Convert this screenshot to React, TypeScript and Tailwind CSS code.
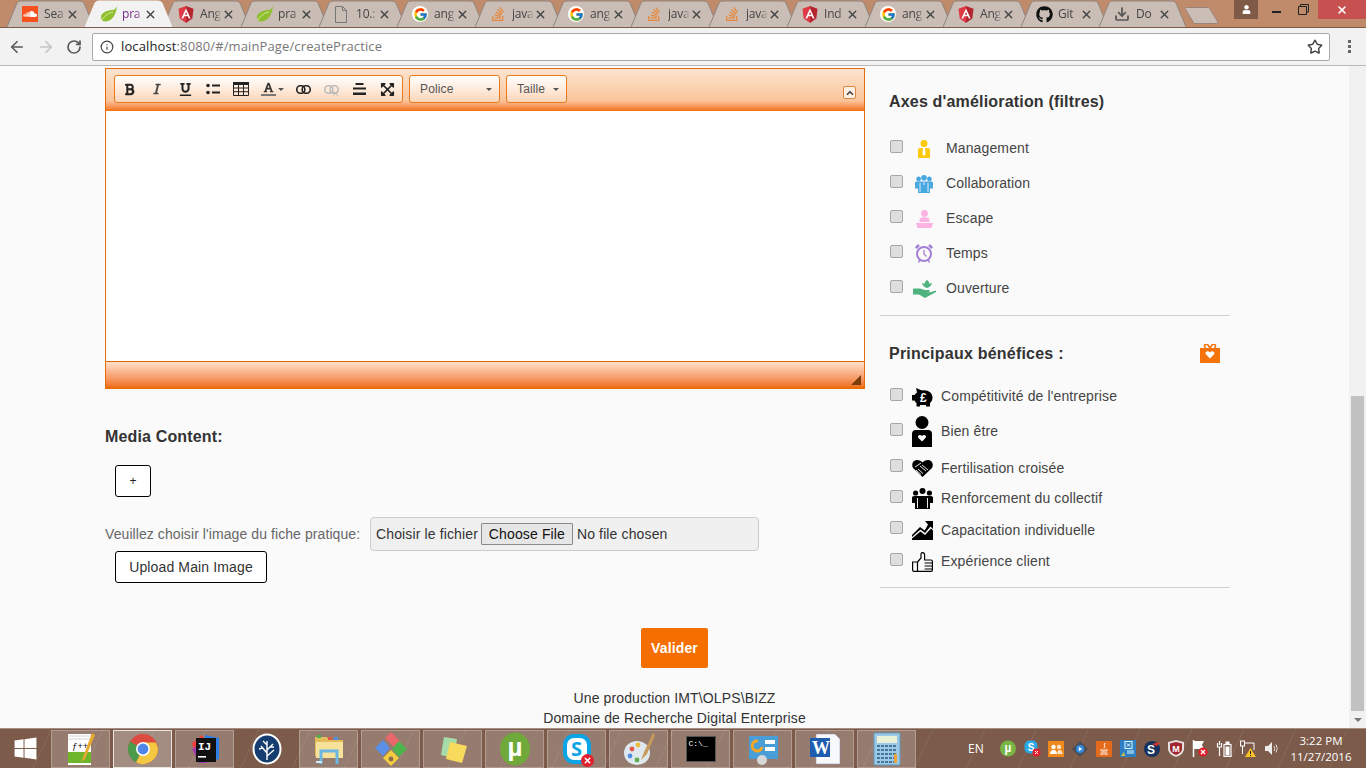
import { ArrowLeft, ArrowRight, RotateCw, Info, Star, X, Download, ChevronUp } from 'lucide-react';
import { FaGithub, FaStackOverflow, FaSoundcloud, FaBold, FaItalic, FaUnderline, FaFont, FaExpandArrowsAlt, FaWindows, FaUser } from 'react-icons/fa';
import { FcGoogle } from 'react-icons/fc';

function AngularIcon() {
  return (
    <svg width="16" height="17" viewBox="0 0 16 17">
      <path d="M8 0 L15.5 2.7 L14.3 12.6 L8 17 Z" fill="#b3262f" />
      <path d="M8 0 L.5 2.7 L1.7 12.6 L8 17 Z" fill="#dd3a45" />
      <path d="M8 2.5 L3.4 12.5 H5.2 L6.1 10.2 H9.9 L10.8 12.5 H12.6 Z M6.8 8.8 L8 5.9 L9.2 8.8 Z" fill="#fff" />
    </svg>
  );
}

function LeafIcon() {
  return (
    <svg width="18" height="18" viewBox="0 0 18 18">
      <path d="M17 1 C16 10 12 16 6 16.5 C3 16.8 1 15 1 12.5 C1 7 8 5 13 5 C15 4.5 16 3 17 1 Z" fill="#8fbf2f" />
      <path d="M2 15 C5 10 9 8 13 7" stroke="#d8ea9c" strokeWidth="1" fill="none" />
    </svg>
  );
}

function DocIcon() {
  return (
    <svg width="14" height="17" viewBox="0 0 14 17" fill="none" stroke="#777">
      <path d="M1.5 .5 H8.5 L12.5 4.5 V16.5 H1.5 Z M8.5 .5 V4.5 H12.5" />
    </svg>
  );
}

function Favicon({ kind }: { kind: string }) {
  if (kind === 'sc')
    return (
      <span className="flex h-[16px] w-[16px] items-center justify-center bg-[#f5501e] text-white">
        <FaSoundcloud size={14} />
      </span>
    );
  if (kind === 'leaf') return <LeafIcon />;
  if (kind === 'ng') return <AngularIcon />;
  if (kind === 'doc') return <DocIcon />;
  if (kind === 'g')
    return (
      <span className="flex h-[16px] w-[16px] items-center justify-center rounded-full bg-white">
        <FcGoogle size={15} />
      </span>
    );
  if (kind === 'so') return <FaStackOverflow size={16} className="text-[#e8883a]" />;
  if (kind === 'gh') return <FaGithub size={17} className="text-[#111]" />;
  return <Download size={16} strokeWidth={2.6} className="text-[#555]" />;
}

const tabs = [
  { kind: 'sc', title: 'Sea' },
  { kind: 'leaf', title: 'pra', active: true },
  { kind: 'ng', title: 'Ang' },
  { kind: 'leaf', title: 'pra' },
  { kind: 'doc', title: '10.:' },
  { kind: 'g', title: 'ang' },
  { kind: 'so', title: 'java' },
  { kind: 'g', title: 'ang' },
  { kind: 'so', title: 'java' },
  { kind: 'so', title: 'java' },
  { kind: 'ng', title: 'Ind' },
  { kind: 'g', title: 'ang' },
  { kind: 'ng', title: 'Ang' },
  { kind: 'gh', title: 'Git' },
  { kind: 'dl', title: 'Do' },
];

function Tab({ kind, title, active }: { kind: string; title: string; active?: boolean }) {
  return (
    <div className={`relative -mr-[9px] h-[27px] w-[87px] shrink-0 ${active ? 'z-10' : ''}`}>
      <svg className="absolute inset-0" width="87" height="27" viewBox="0 0 87 27">
        <path
          d="M0 27 L10 3 Q11 1 14 1 H73 Q76 1 77 3 L87 27"
          fill={active ? '#f2f2f2' : '#c9bdb6'}
          stroke={active ? '#f2f2f2' : '#8f8580'}
        />
      </svg>
      <div className="relative flex h-full items-center pl-[15px] pt-[1px]">
        <span className="flex w-[22px] shrink-0 items-center">
          <Favicon kind={kind} />
        </span>
        <span className={`w-[22px] overflow-hidden whitespace-nowrap text-[12px] tracking-[-0.2px] [mask-image:linear-gradient(to_right,black_65%,transparent)] ${active ? 'text-[#7a2a8a]' : 'text-[#444]'}`}>
          {title}
        </span>
        <X size={13} strokeWidth={2.6} className="text-[#444]" />
      </div>
    </div>
  );
}

function ChromeBar() {
  return (
    <div className="shrink-0 font-['Open_Sans',sans-serif]">
      <div className="relative flex h-[28px] items-end overflow-hidden border-b border-[#7d5a44] bg-[#bf8b6b] pl-[7px]">
        {tabs.map((t, i) => (
          <Tab key={i} kind={t.kind} title={t.title} active={t.active} />
        ))}
        {/* new tab button */}
        <svg className="ml-[7px] mr-auto mt-[7px] self-start" width="35" height="17" viewBox="0 0 35 17">
          <path d="M1 1.5 Q1 .5 3 .5 H25 L34 15 Q34 16.5 32 16.5 H10 Z" fill="#c9bdb6" stroke="#9a8478" />
        </svg>
        <div className="flex h-[19px] w-[24px] items-center justify-center self-start bg-[#7f5a46] text-white">
          <FaUser size={9} />
        </div>
        <div className="flex h-[19px] w-[60px] items-start self-start">
          <span className="ml-[14px] mt-[11px] h-[2px] w-[9px] bg-[#222]" />
          <svg className="ml-[17px] mt-[4px]" width="11" height="11" viewBox="0 0 11 11" fill="none" stroke="#222">
            <path d="M2.5 2 V.5 H10.5 V8 H8.5 M.5 2.5 H8.5 V10.5 H.5 Z" />
          </svg>
        </div>
        <div className="flex h-[19px] w-[48px] items-center justify-center self-start bg-[#c75050] text-white">
          <X size={12} strokeWidth={3.2} />
        </div>
      </div>
      <div className="flex h-[38px] items-center border-b border-[#b9b9b9] bg-[#f2f2f2]">
        <ArrowLeft size={18} strokeWidth={2.2} className="ml-[8px] text-[#5a5a5a]" />
        <ArrowRight size={18} strokeWidth={2.2} className="ml-[11px] text-[#c4c4c4]" />
        <RotateCw size={16} strokeWidth={2.6} className="ml-[11px] text-[#5a5a5a]" />
        <div className="ml-[10px] flex h-[28px] w-[1238px] items-center rounded-[2px] border border-[#a9a9a9] bg-white pl-[7px] pr-[6px]">
          <Info size={14} className="text-[#444]" />
          <span className="ml-[7px] text-[13px] tracking-[0.12px] text-[#777]">
            <span className="text-[#222]">localhost</span>:8080/#/mainPage/createPractice
          </span>
          <Star size={16} strokeWidth={2.2} className="ml-auto text-[#444]" />
        </div>
        <div className="ml-[18px] flex flex-col gap-[2px]">
          <span className="h-[3px] w-[3px] bg-[#666]" />
          <span className="h-[3px] w-[3px] bg-[#666]" />
          <span className="h-[3px] w-[3px] bg-[#666]" />
        </div>
      </div>
    </div>
  );
}

function Caret() {
  return <span className="h-0 w-0 border-x-[3px] border-t-[3px] border-x-transparent border-t-[#555]" />;
}

function ChainIcon({ color }: { color: string }) {
  return (
    <svg width="15" height="9" viewBox="0 0 15 9" fill="none" stroke={color} strokeWidth="1.6">
      <rect x=".8" y=".8" width="8" height="7.4" rx="3.5" />
      <rect x="6.2" y=".8" width="8" height="7.4" rx="3.5" />
    </svg>
  );
}

function EditorToolbar() {
  const btn = 'flex h-full w-[28px] items-center justify-center text-[#222]';
  return (
    <div className="flex h-[42px] items-start bg-gradient-to-b from-[#fde4d0] via-[#fac59b] via-75% to-[#f37000] pl-[8px] pt-[6px]">
      <div className="flex h-[28px] w-[289px] rounded-[3px] border border-[#ea7a1c] bg-gradient-to-b from-white to-[#fbd6b9]">
        <div className={btn}><FaBold size={13} /></div>
        <div className={btn}><FaItalic size={12} className="text-[#444]" /></div>
        <div className={btn}><FaUnderline size={13} /></div>
        <div className={btn}>
          <svg width="14" height="12" viewBox="0 0 14 12" fill="#222">
            <circle cx="2" cy="2.5" r="1.8" />
            <circle cx="2" cy="9.5" r="1.8" />
            <rect x="6" y="1.5" width="8" height="2" />
            <rect x="6" y="8.5" width="8" height="2" />
          </svg>
        </div>
        <div className={btn}>
          <svg width="16" height="14" viewBox="0 0 16 14" fill="none" stroke="#222">
            <path d="M.5 2 H15.5 V13.5 H.5 Z M.5 6 H15.5 M.5 9.7 H15.5 M5.5 2 V13.5 M10.5 2 V13.5" />
            <rect x=".5" y=".5" width="15" height="2" fill="#222" />
          </svg>
        </div>
        <div className="flex h-full w-[34px] items-center justify-center gap-[2px]">
          <span className="flex flex-col items-center">
            <FaFont size={11} className="text-[#333]" />
            <span className="mt-[1px] h-[2px] w-[15px] bg-[#777]" />
          </span>
          <Caret />
        </div>
        <div className={btn}><ChainIcon color="#222" /></div>
        <div className={btn}>
          <span className="relative flex">
            <ChainIcon color="#bbb" />
            <X size={7} strokeWidth={3} className="absolute -bottom-[3px] right-0 text-[#aaa]" />
          </span>
        </div>
        <div className={btn}>
          <svg width="13" height="12" viewBox="0 0 13 12" fill="#222">
            <rect x="2.5" y="0" width="8" height="2" />
            <rect x="0" y="4.5" width="13" height="2" />
            <rect x="0" y="9.5" width="13" height="2.5" />
          </svg>
        </div>
        <div className={btn}><FaExpandArrowsAlt size={15} /></div>
      </div>
      <div className="ml-[6px] flex h-[28px] w-[91px] items-center justify-between rounded-[3px] border border-[#ea7a1c] bg-gradient-to-b from-white to-[#fbd6b9] pl-[10px] pr-[7px] text-[12px] text-[#555]">
        Police <Caret />
      </div>
      <div className="ml-[6px] flex h-[28px] w-[61px] items-center justify-between rounded-[3px] border border-[#ea7a1c] bg-gradient-to-b from-white to-[#fbd6b9] pl-[10px] pr-[7px] text-[12px] text-[#555]">
        Taille <Caret />
      </div>
      <div className="ml-[276px] mt-[11px] flex h-[13px] w-[13px] items-center justify-center rounded-[2px] border border-[#d9893f] bg-[#fdeee2]">
        <ChevronUp size={10} strokeWidth={4} className="text-[#444]" />
      </div>
    </div>
  );
}

function Editor() {
  return (
    <div className="mt-[2px] flex h-[321px] flex-col border border-[#e56c0a]">
      <EditorToolbar />
      <div className="h-[250px] bg-white" />
      <div className="flex flex-1 items-end justify-end border-t border-[#d9660a] bg-gradient-to-b from-[#fde0ca] to-[#ee6c00] pb-[3px] pr-[3px]">
        <span className="h-0 w-0 border-b-[10px] border-l-[10px] border-b-[#7a3d0c] border-l-transparent" />
      </div>
    </div>
  );
}

function LeftColumn() {
  return (
    <div className="w-[760px] shrink-0">
      <Editor />
      <h3 className="mt-[36px] h-[24px] text-[16px] font-bold leading-[24px] tracking-[0.15px] text-[#333]">Media Content:</h3>
      <button className="ml-[10px] mt-[16px] block h-[32px] w-[36px] rounded-[3px] border border-black bg-white text-[12px] text-[#222]">+</button>
      <div className="mt-[20px] flex items-center">
        <span className="w-[255px] shrink-0 whitespace-nowrap text-[14px] tracking-[0.08px] text-[#666]">Veuillez choisir l'image du fiche pratique:</span>
        <div className="ml-[10px] flex h-[34px] w-[389px] items-center rounded-[4px] border border-[#ccc] bg-[#f0f0f0] pl-[5px] text-[14px] text-[#333]">
          Choisir le fichier
          <span className="ml-[3px] flex h-[22px] w-[92px] items-center justify-center rounded-[1px] border border-[#8a8a8a] bg-[#e6e6e6] text-[#111]">Choose File</span>
          <span className="ml-[4px]">No file chosen</span>
        </div>
      </div>
      <button className="ml-[10px] block h-[32px] w-[152px] rounded-[3px] border border-black bg-white text-[14px] text-[#333]">Upload Main Image</button>
    </div>
  );
}

function PersonTie() {
  return (
    <svg width="14" height="18" viewBox="0 0 14 18" fill="#fdc90a">
      <circle cx="7" cy="3.6" r="3.5" />
      <path d="M1 18 V10 Q1 8 3 8 H11 Q13 8 13 10 V18 Z" />
      <path d="M6 8 H8 L8.6 14 L7 16 L5.4 14 Z" fill="#fff" />
    </svg>
  );
}

function BlueGroup() {
  return (
    <svg width="18" height="18" viewBox="0 0 18 18" fill="#4aa8e0">
      <circle cx="3.6" cy="4" r="2.4" />
      <circle cx="14.4" cy="4" r="2.4" />
      <circle cx="9" cy="2.8" r="2.8" />
      <path d="M0 7.5 Q0 6.5 2 6.5 H16 Q18 6.5 18 7.5 V13.5 H15 V18 H3 V13.5 H0 Z" />
      <path d="M5 8 V17 M13 8 V17 M9 7 V10" stroke="#fff" strokeWidth=".8" />
    </svg>
  );
}

function PinkDesk() {
  return (
    <svg width="17" height="18" viewBox="0 0 17 18" fill="#fcb3e3">
      <circle cx="8.5" cy="3.5" r="3.4" />
      <path d="M3.5 12 V10 Q3.5 7.5 6 7.5 H11 Q13.5 7.5 13.5 10 V12 Z" />
      <path d="M0 13 H17 L15.5 18 H1.5 Z" />
    </svg>
  );
}

function PurpleClock() {
  return (
    <svg width="18" height="19" viewBox="0 0 18 19" fill="none" stroke="#a47fd8" strokeWidth="2">
      <circle cx="9" cy="10" r="7" />
      <path d="M9 6 V10 L11.5 12.5" strokeWidth="1.3" />
      <path d="M3.5 18.5 L5 15.5 M14.5 18.5 L13 15.5" strokeWidth="1.5" />
      <path d="M.8 4 L4 1 M17.2 4 L14 1" strokeWidth="2.4" />
    </svg>
  );
}

function GreenHand() {
  return (
    <svg width="23" height="18" viewBox="0 0 23 18" fill="#4fb37f">
      <path d="M14 8 C11 7.5 9.5 5 9 3 C10 3 10.8 3.3 11.5 4 C11.6 2.5 12.5 1 14 0 C15.5 1 16.4 2.5 16.5 4 C17.2 3.3 18 3 19 3 C18.5 5 17 7.5 14 8 Z" />
      <path d="M0 8.5 H7 L12 10 H16 Q17 10.5 16.5 12 H12 L17 12.3 L23 10.5 V12 L12 18 L6 14.5 H0 Z" />
    </svg>
  );
}

function GiftIcon() {
  return (
    <svg width="20" height="19" viewBox="0 0 20 19" fill="#f4730a">
      <path d="M0 4 H20 V19 H0 Z" />
      <path d="M5.5 4 C3 1 6 -1 8 1 L10 4 L12 1 C14 -1 17 1 14.5 4" fill="none" stroke="#f4730a" strokeWidth="1.6" />
      <path d="M10 14.5 L5.8 10.3 C4.5 8 7.8 6 10 8.5 C12.2 6 15.5 8 14.2 10.3 Z" fill="#fff" />
    </svg>
  );
}

function PiggyPound() {
  return (
    <svg width="21" height="20" viewBox="0 0 21 20" fill="#000">
      <path d="M4 1 L10 3.5 C16 2.5 20.5 6 20.5 10.5 C20.5 13 19.5 15 18 16 V19.5 H14 V18 H8 V19.5 H4.5 V16 C3.5 15.2 3 14.5 2.5 13.5 H0 V8 H2.5 C3 7 3.8 6.2 5 5.5 Z" />
      <text x="11.5" y="14.5" fontSize="12" fontWeight="700" textAnchor="middle" fill="#fff" fontFamily="Liberation Sans">£</text>
    </svg>
  );
}

function PersonHeart() {
  return (
    <svg width="20" height="31" viewBox="0 0 20 31">
      <circle cx="10" cy="6.5" r="6.5" fill="#000" />
      <path d="M0 31 V18 Q0 14 4 14 H16 Q20 14 20 18 V31 Z" fill="#000" />
      <path d="M10 25.5 L6.3 21.8 C5 19.7 8 18 10 20 C12 18 15 19.7 13.7 21.8 Z" fill="#fff" />
    </svg>
  );
}

function HandshakeHeart() {
  return (
    <svg width="21" height="18" viewBox="0 0 21 18">
      <path d="M10.5 18 L1 9 C-1 5.5 1 1 5 1 C7.5 1 9.3 2 10.5 3.5 C11.7 2 13.5 1 16 1 C20 1 22 5.5 20 9 Z" fill="#000" />
      <path d="M3 8 L9 4 M8 7 L14 12 M10 6 L16 11 M6 10 L11 14.5 M4 11 L9 15.5" stroke="#fff" strokeWidth=".9" fill="none" />
    </svg>
  );
}

function BlackGroup() {
  return (
    <svg width="21" height="21" viewBox="0 0 21 21" fill="#000">
      <circle cx="10.5" cy="3" r="3" />
      <circle cx="3.6" cy="5" r="2.6" />
      <circle cx="17.4" cy="5" r="2.6" />
      <path d="M0 9.5 Q0 8 2 8 H19 Q21 8 21 9.5 V15 H18 V21 H3 V15 H0 Z" />
      <path d="M5.5 10 V20 M15.5 10 V20" stroke="#fff" strokeWidth=".9" />
    </svg>
  );
}

function ChartUp() {
  return (
    <svg width="21" height="19" viewBox="0 0 21 19" fill="#000">
      <path d="M13 0 H21 V8 L18.5 5.5 L13 12 L8.5 8.5 L0 16 V14 L8 6 L12.7 9.5 L16 3.5 Z" />
      <path d="M0 19 V17.5 L8.5 10.5 L13 14 L19 7.5 L21 9.5 V19 Z" />
    </svg>
  );
}

function ThumbUp() {
  return (
    <svg width="21" height="20" viewBox="0 0 21 20" fill="none" stroke="#000" strokeWidth="1.2">
      <path d="M.6 10 H5.5 V19.4 H2 Q.6 19.4 .6 18 Z" />
      <path d="M5.5 10 L9 6 V2 Q9 .6 10.5 .6 Q12.6 .6 12.6 3 V8 H19 Q20.4 8 20.4 9.5 V18 Q20.4 19.4 19 19.4 H5.5" />
      <path d="M12.6 11 H20.4 M12.6 14 H20.4 M12.6 17 H20.4" />
    </svg>
  );
}

const filters = [
  { label: 'Management', icon: <PersonTie /> },
  { label: 'Collaboration', icon: <BlueGroup /> },
  { label: 'Escape', icon: <PinkDesk /> },
  { label: 'Temps', icon: <PurpleClock /> },
  { label: 'Ouverture', icon: <GreenHand /> },
];

const benefits = [
  { label: "Compétitivité de l'entreprise", h: 'h-[33px]', icon: <PiggyPound /> },
  { label: 'Bien être', h: 'h-[37px]', icon: <PersonHeart /> },
  { label: 'Fertilisation croisée', h: 'h-[36px]', icon: <HandshakeHeart /> },
  { label: 'Renforcement du collectif', h: 'h-[25px]', icon: <BlackGroup /> },
  { label: 'Capacitation individuelle', h: 'h-[38px]', icon: <ChartUp /> },
  { label: 'Expérience client', h: 'h-[25px]', icon: <ThumbUp /> },
];

function Check() {
  return (
    <input
      type="checkbox"
      readOnly
      className="mb-[5px] h-[13px] w-[13px] shrink-0 appearance-none rounded-[2px] border border-[#a6a6a6] bg-[#dedede]"
    />
  );
}

function RightColumn() {
  return (
    <div className="ml-[15px] w-[350px] shrink-0">
      <div className="border-b border-[#cfcfcf] pb-[9px] pl-[9px] pt-[24px]">
        <h3 className="h-[24px] text-[16px] font-bold leading-[24px] tracking-[0.18px] text-[#333]">Axes d'amélioration (filtres)</h3>
        <ul className="mt-[17px]">
          {filters.map((f) => (
            <li key={f.label} className="flex h-[35px] items-center pl-px text-[14px] text-[#444]">
              <Check />
              <span className="ml-[9px] flex w-[24px] justify-center">{f.icon}</span>
              <span className="ml-[10px]">{f.label}</span>
            </li>
          ))}
        </ul>
      </div>
      <div className="border-b border-[#cfcfcf] pb-[13px] pl-[9px] pt-[26px]">
        <h3 className="flex h-[24px] justify-between pr-[10px] text-[16px] font-bold leading-[24px] tracking-[0.22px] text-[#333]">
          Principaux bénéfices :
          <span className="mt-[2px] flex h-[19px]"><GiftIcon /></span>
        </h3>
        <ul className="mt-[14px]">
          {benefits.map((b) => (
            <li key={b.label} className={`flex items-center pl-px text-[14px] text-[#444] ${b.h}`}>
              <Check />
              <span className="ml-[7px] flex w-[24px] justify-center">{b.icon}</span>
              <span className="ml-[7px]">{b.label}</span>
            </li>
          ))}
        </ul>
      </div>
    </div>
  );
}

function Scrollbar() {
  return (
    <div className="flex w-[17px] shrink-0 flex-col bg-[#f1f1f1]">
      <div className="mx-[2px] mt-auto h-[315px] bg-[#c1c1c1]" />
      <div className="flex h-[17px] items-center justify-center">
        <span className="h-0 w-0 border-x-[4px] border-t-[4px] border-x-transparent border-t-[#777]" />
      </div>
    </div>
  );
}

function ChromeLogo() {
  return (
    <svg width="32" height="32" viewBox="0 0 32 32">
      <circle cx="16" cy="16" r="15" fill="#dd4b3e" />
      <path d="M16 16 L3 8.5 A15 15 0 0 0 9 29.3 Z" fill="#4a9b4a" />
      <path d="M16 16 L9 29.3 A15 15 0 0 0 30.9 15 L29 9.5 H16 Z" fill="#f5c842" />
      <circle cx="16" cy="16" r="7" fill="#fff" />
      <circle cx="16" cy="16" r="5.4" fill="#4f86e8" />
    </svg>
  );
}

const taskApps: React.ReactNode[] = [
  <svg width="28" height="34" viewBox="0 0 28 34" key="npp">
    <rect x="1" y="2" width="23" height="31" fill="#fff" />
    <rect x="1" y="20" width="23" height="11" fill="#6fb52c" />
    <path d="M1 4 H24 M1 7 H24" stroke="#bbb" strokeWidth=".6" />
    <text x="5" y="17" fontSize="9" fill="#111" fontFamily="Liberation Mono">ƒ++</text>
    <path d="M25 1 L16 25 L14.5 30 L18 27 L28 3 Z" fill="#e8a92e" />
  </svg>,
  <ChromeLogo key="chrome" />,
  <svg width="32" height="32" viewBox="0 0 32 32" key="ij">
    <path d="M3 10 L13 2 L20 16 L6 22 Z" fill="#f0403f" />
    <path d="M16 2 L30 5 L30 26 L14 30 Z" fill="#2e7fe8" />
    <path d="M3 16 L10 30 L18 30 L10 12 Z" fill="#a23bb0" />
    <rect x="7" y="5" width="20" height="24" fill="#111" />
    <text x="9" y="17" fontSize="11" fontWeight="700" fill="#fff" fontFamily="Liberation Mono">IJ</text>
    <rect x="9" y="23" width="8" height="1.6" fill="#fff" />
  </svg>,
  <svg width="30" height="32" viewBox="0 0 30 32" key="tree">
    <ellipse cx="15" cy="16" rx="14.5" ry="15.5" fill="#fff" />
    <ellipse cx="15" cy="16" rx="12.5" ry="13.5" fill="#153d70" />
    <path d="M15 27 V8 M15 20 L9 13 M15 17 L21 11 M15 23 L22 17 M11 15 L7 16 M15 12 L11 8 M18 14 L22 14" stroke="#fff" strokeWidth="1.4" fill="none" />
  </svg>,
  <svg width="32" height="34" viewBox="0 0 32 34" key="folder">
    <path d="M2 5 H14 L16 8 H30 V24 H2 Z" fill="#e3bd5c" />
    <rect x="4" y="3" width="4" height="3" fill="#4cb050" />
    <rect x="15" y="5" width="4" height="3" fill="#e0564a" />
    <rect x="21" y="5" width="4" height="3" fill="#4e8ee0" />
    <rect x="3" y="10" width="27" height="16" fill="#f6e29a" />
    <path d="M8 32 V19 H24 V32" fill="none" stroke="#6cb6e2" strokeWidth="3" />
    <path d="M3 30 H9" stroke="#cfeafa" strokeWidth="2" />
  </svg>,
  <svg width="32" height="34" viewBox="0 0 32 34" key="git">
    <path d="M16 0 L25 9 L19 15 L10 6 Z" fill="#e8676b" />
    <path d="M8 8 L15 16 L8 24 L0 16 Z" fill="#5b8fe8" />
    <path d="M24 9 L32 17 L24 25 L17 17 Z" fill="#4eb54e" />
    <path d="M8 26 L16 18 L24 26 L16 34 Z" fill="#f3cc3f" />
    <circle cx="16" cy="27" r="2.4" fill="#8a6d52" />
  </svg>,
  <svg width="32" height="30" viewBox="0 0 32 30" key="sticky">
    <path d="M7 3 L20 5 L17 24 L4 21 Z" fill="#a6dca8" />
    <path d="M13 8 L30 12 L25 29 L9 25 Z" fill="#f8da5c" />
  </svg>,
  <svg width="32" height="34" viewBox="0 0 32 34" key="ut">
    <ellipse cx="16" cy="17" rx="15" ry="16.5" fill="#6fa93a" />
    <text x="16" y="24" fontSize="26" fontWeight="700" textAnchor="middle" fill="#fff" fontFamily="Liberation Sans">µ</text>
  </svg>,
  <span className="relative flex" key="skype">
    <span className="flex h-[30px] w-[28px] items-center justify-center rounded-[11px] border-[4px] border-[#0ba5e6] bg-white text-[20px] font-bold leading-none text-[#0ba5e6]">S</span>
    <span className="absolute -bottom-[3px] -right-[3px] flex h-[13px] w-[13px] items-center justify-center rounded-full bg-[#e0202c] text-white">
      <X size={9} strokeWidth={4} />
    </span>
  </span>,
  <svg width="32" height="34" viewBox="0 0 32 34" key="paint">
    <ellipse cx="14" cy="21" rx="13" ry="12" fill="#dfe8ec" />
    <circle cx="9" cy="17" r="2.4" fill="#e0564a" />
    <circle cx="15" cy="13" r="2.4" fill="#e8bd3e" />
    <circle cx="7" cy="24" r="2.4" fill="#4e8ee0" />
    <circle cx="14" cy="28" r="2.4" fill="#5dab52" />
    <path d="M30 1 L21 20 L18 28 L24 22 L32 3 Z" fill="#c79a5d" />
  </svg>,
  <span className="flex h-[26px] w-[30px] items-start border border-[#555] bg-black p-[2px] font-['Liberation_Mono',monospace] text-[8px] leading-[10px] text-white" key="cmd">
    C:\_
  </span>,
  <svg width="32" height="32" viewBox="0 0 32 32" key="ctrl">
    <rect x="2" y="3" width="29" height="23" fill="#4a9ed8" />
    <path d="M11 8 A5 5 0 1 0 15 14" fill="none" stroke="#f5a623" strokeWidth="3" />
    <rect x="18" y="7" width="10" height="4" fill="#fff" />
    <rect x="18" y="14" width="10" height="4" fill="#fff" />
    <circle cx="15" cy="27" r="5" fill="#d8d8d8" />
  </svg>,
  <svg width="32" height="32" viewBox="0 0 32 32" key="word">
    <path d="M7 1 H26 L31 6 V31 H7 Z" fill="#f6f8fb" stroke="#88a" strokeWidth=".5" />
    <path d="M1 5 H21 V24 H1 Z" fill="#1e5cb0" />
    <text x="3" y="21" fontSize="18" fontWeight="700" fill="#fff" fontFamily="Liberation Serif">W</text>
  </svg>,
  <svg width="28" height="34" viewBox="0 0 28 34" key="calc">
    <rect x="1" y="1" width="26" height="32" rx="1" fill="#9cc9e6" stroke="#5f9ac2" />
    <rect x="4" y="4" width="20" height="7" fill="#e9f1d8" />
    <path d="M4 14 H24 M4 18 H24 M4 22 H24 M4 26 H24 M4 30 H24" stroke="#46769c" strokeWidth="2" strokeDasharray="3 1" />
    <rect x="21" y="22" width="3" height="9" fill="#eea43b" />
  </svg>,
];

const trayIcons: React.ReactNode[] = [
  <svg width="16" height="17" viewBox="0 0 16 17" key="ut">
    <circle cx="8" cy="8.5" r="8" fill="#79b544" />
    <text x="8" y="12" fontSize="12" fontWeight="700" textAnchor="middle" fill="#fff" fontFamily="Liberation Sans">µ</text>
  </svg>,
  <svg width="17" height="17" viewBox="0 0 17 17" key="skype">
    <rect x=".5" y=".5" width="13" height="13" rx="5" fill="#2aa9e6" />
    <text x="7" y="11" fontSize="10" fontWeight="700" textAnchor="middle" fill="#fff" fontFamily="Liberation Sans">S</text>
    <circle cx="12.5" cy="12.5" r="4" fill="#e0202c" />
    <path d="M11 11 L14 14 M14 11 L11 14" stroke="#fff" />
  </svg>,
  <svg width="16" height="16" viewBox="0 0 16 16" key="people">
    <rect width="16" height="16" fill="#f08a1d" />
    <circle cx="5.5" cy="6" r="2.2" fill="#fff" />
    <circle cx="11" cy="6" r="2.2" fill="#fde2c3" />
    <path d="M2 13 Q2 9 5.5 9 Q9 9 9 13 Z" fill="#fff" />
    <path d="M9.5 13 Q9.5 9 11 9 Q14.5 9 14.5 13 Z" fill="#fde2c3" />
  </svg>,
  <svg width="16" height="16" viewBox="0 0 16 16" key="play">
    <path d="M8 0 L16 8 L8 16 L0 8 Z" fill="#4a4f57" />
    <circle cx="8" cy="8" r="4" fill="#2f8de4" />
    <path d="M6.8 5.8 L10.2 8 L6.8 10.2 Z" fill="#fff" />
  </svg>,
  <svg width="16" height="16" viewBox="0 0 16 16" key="java">
    <rect width="16" height="16" rx="1" fill="#e46b1b" />
    <path d="M9 2 C7 4 10 5 8 7 M4 9 H12 M5 11 H11 M4 13 H12" stroke="#fff" fill="none" />
  </svg>,
  <svg width="16" height="17" viewBox="0 0 16 17" key="blue">
    <rect width="16" height="17" fill="#2f7fc4" />
    <rect x="5" y="1.5" width="7" height="7" fill="none" stroke="#dff" />
    <path d="M7 3.5 L10 6.5 M10 3.5 L7 6.5" stroke="#fff" />
    <path d="M7 11 H14 M7 13 H14" stroke="#dff" />
    <path d="M1 16 L4 12 L5 16 Z" fill="#d9c53a" />
  </svg>,
  <svg width="16" height="16" viewBox="0 0 16 16" key="dark">
    <circle cx="8" cy="8" r="8" fill="#15325e" />
    <text x="7" y="12.5" fontSize="12" fontWeight="700" textAnchor="middle" fill="#fff" fontFamily="Liberation Sans">S</text>
    <path d="M8 3 L16 1 L13 5 Z" fill="#e0302c" />
  </svg>,
  <svg width="16" height="17" viewBox="0 0 16 17" key="mcafee">
    <path d="M8 0 L16 2 V9 Q16 14 8 17 Q0 14 0 9 V2 Z" fill="#e4e0de" />
    <path d="M8 2 L14 3.5 V9 Q14 12.5 8 15 Q2 12.5 2 9 V3.5 Z" fill="#a0262f" />
    <text x="8" y="12" fontSize="9" fontWeight="700" textAnchor="middle" fill="#fff" fontFamily="Liberation Sans">M</text>
  </svg>,
  <svg width="16" height="17" viewBox="0 0 16 17" key="flag">
    <path d="M1.5 0 V17" stroke="#fff" strokeWidth="1.5" />
    <path d="M2 1 H12 L10 5 L12 9 H2 Z" fill="#fff" />
    <circle cx="11" cy="12" r="4.6" fill="#e0202c" />
    <path d="M9 10 L13 14 M13 10 L9 14" stroke="#fff" strokeWidth="1.3" />
  </svg>,
  <svg width="16" height="16" viewBox="0 0 16 16" key="battery" fill="none" stroke="#fff">
    <rect x="8" y="3.5" width="7" height="12" strokeWidth="1.2" />
    <rect x="10" y="1" width="3" height="2.5" fill="#fff" />
    <rect x="10" y="6" width="3" height="8" fill="#fff" />
    <path d="M3.5 0 V4 M1.5 2 V6 H5.5 V2 M3.5 6 V15" strokeWidth="1.2" />
  </svg>,
  <svg width="16" height="17" viewBox="0 0 16 17" key="net" fill="none" stroke="#fff">
    <rect x=".5" y="1" width="4" height="5" />
    <path d="M2.5 6 V14 M4.5 3 H14 V10" />
    <path d="M10.5 8 L16 17 H5 Z" fill="#f7c325" stroke="none" />
    <path d="M10.5 11 V14 M10.5 15 V16" stroke="#222" />
  </svg>,
  <svg width="16" height="15" viewBox="0 0 16 15" key="sound">
    <path d="M1 5 H4 L8 1 V14 L4 10 H1 Z" fill="#ececec" />
    <path d="M10 5 Q11.5 7.5 10 10 M12 3.5 Q14.5 7.5 12 11.5" stroke="#ddd" fill="none" />
  </svg>,
];

function Taskbar() {
  return (
    <div className="flex h-[40px] shrink-0 items-center border-t border-[#a68f82] bg-[#7c5b4b] bg-[repeating-linear-gradient(115deg,transparent_0,transparent_46px,rgba(255,255,255,0.07)_46px,rgba(255,255,255,0.07)_47px)] font-['Open_Sans',sans-serif]">
      <div className="flex w-[51px] shrink-0 justify-center">
        <FaWindows size={25} className="text-white" />
      </div>
      <div className="flex gap-[3px]">
        {taskApps.map((icon, i) => (
          <div
            key={i}
            className={`flex h-[38px] w-[59px] items-center justify-center border ${i === 1 ? 'border-[#e8e4e0] bg-white/30' : i === 3 ? 'border-transparent' : 'border-white/25 bg-white/20'}`}
          >
            {icon}
          </div>
        ))}
      </div>
      <span className="ml-[52px] w-[18px] text-[12px] text-white">EN</span>
      <div className="ml-[10px] flex">
        {trayIcons.map((icon, i) => (
          <span key={i} className="flex w-[24px] items-center justify-center">{icon}</span>
        ))}
      </div>
      <div className="w-[74px] text-center text-[11.5px] leading-[16px] text-white">
        <div>3:22 PM</div>
        <div>11/27/2016</div>
      </div>
    </div>
  );
}

export default function App() {
  return (
    <div className="flex h-screen w-[1366px] flex-col overflow-hidden bg-[#fafafa] font-['Liberation_Sans',Arial,sans-serif]">
      <ChromeBar />
      <div className="flex h-[662px] shrink-0">
        <main className="w-[1349px] shrink-0 overflow-hidden tracking-[0.13px]">
          <div className="flex pl-[105px]">
            <LeftColumn />
            <RightColumn />
          </div>
          <button className="mx-auto mt-[40px] block h-[40px] w-[67px] rounded-[2px] bg-[#f56f00] text-[14px] font-bold text-white">Valider</button>
          <footer className="mt-[20px] text-center text-[14px] leading-[20px] text-[#333]">
            <div>Une production IMT\OLPS\BIZZ</div>
            <div>Domaine de Recherche Digital Enterprise</div>
          </footer>
        </main>
        <Scrollbar />
      </div>
      <Taskbar />
    </div>
  );
}
